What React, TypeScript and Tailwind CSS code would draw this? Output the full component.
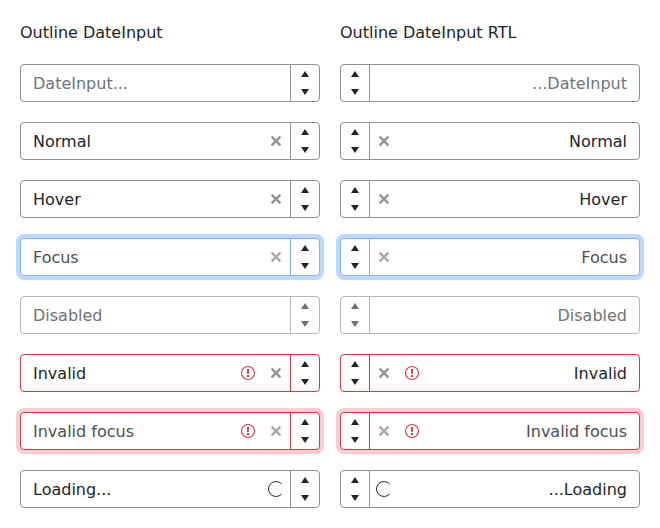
import React from "react";

type State = { label: string; rtl: string; kind?: "placeholder" | "focus" | "disabled" | "invalid" | "invalidFocus" | "loading" };

const rows: State[] = [
  { label: "DateInput...", rtl: "...DateInput", kind: "placeholder" },
  { label: "Normal", rtl: "Normal" },
  { label: "Hover", rtl: "Hover" },
  { label: "Focus", rtl: "Focus", kind: "focus" },
  { label: "Disabled", rtl: "Disabled", kind: "disabled" },
  { label: "Invalid", rtl: "Invalid", kind: "invalid" },
  { label: "Invalid focus", rtl: "Invalid focus", kind: "invalidFocus" },
  { label: "Loading...", rtl: "...Loading", kind: "loading" },
];

function Clear() {
  return (
    <svg className="h-4 w-4 shrink-0" viewBox="0 0 16 16" fill="none" stroke="currentColor" strokeWidth="2.3">
      <path d="M3.6 3.6l8.8 8.8M12.4 3.6l-8.8 8.8" />
    </svg>
  );
}

function Warning() {
  return (
    <svg className="h-4 w-4 shrink-0 text-[#dc3545]" viewBox="0 0 16 16" fill="currentColor">
      <circle cx="8" cy="8" r="6.5" fill="none" stroke="currentColor" strokeWidth="1.1" />
      <path d="M7 4h2l-.2 5H7.2zM7 10h2v2H7z" />
    </svg>
  );
}

function Spinner() {
  return (
    <svg className="h-4 w-4 shrink-0" viewBox="0 0 16 16" fill="none" stroke="currentColor">
      <path d="M13.6 3A7.5 7.5 0 1 0 13.6 13" />
    </svg>
  );
}

function Field({ state, rtl }: { state: State; rtl: boolean }) {
  const k = state.kind;
  const red = k === "invalid" || k === "invalidFocus";
  const focus = k === "focus" || k === "invalidFocus";
  const border = red ? "border-[#dc3545]" : k === "focus" ? "border-[#80b3ff]" : "border-[#8f9193]";
  const ring = k === "focus" ? "ring-4 ring-[#c0d8ff]" : k === "invalidFocus" ? "ring-4 ring-[#f6cdd1]" : "";
  const color = k === "placeholder" ? "text-[#6c757d]" : focus ? "text-[#495057]" : "text-[#212529]";
  const clear = k !== "placeholder" && k !== "disabled" && k !== "loading";
  return (
    <div className={`flex h-[38px] w-[300px] rounded-[4px] border bg-white ${rtl ? "flex-row-reverse" : ""} ${border} ${ring} ${color} ${k === "disabled" ? "opacity-65" : ""}`}>
      <div className={`flex min-w-0 flex-1 items-center ${rtl ? "flex-row-reverse pr-3 pl-1.5" : "pr-1.5 pl-3"}`}>
        <span className={`flex-1 pt-0.5 ${rtl ? "text-right" : ""}`}>{rtl ? state.rtl : state.label}</span>
        <div className={`flex items-center gap-3 ${rtl ? "flex-row-reverse" : ""}`}>
          {red && <Warning />}
          {clear && <span className={focus ? "text-[#a7a7a7]" : "text-[#909294]"}><Clear /></span>}
          {k === "loading" && <Spinner />}
        </div>
      </div>
      <div className={`flex w-[29px] shrink-0 items-center justify-center ${rtl ? "border-r" : "border-l"} ${border}`}>
        <svg className="h-9 w-4 text-[#212529]" viewBox="0 0 16 36" fill="currentColor">
          <path d="M8 6l4 6H4zM8 30l4-6H4z" />
        </svg>
      </div>
    </div>
  );
}

export default function App() {
  return (
    <main className="flex h-[528px] w-[660px] gap-5 bg-white px-5 pt-5 font-['DejaVu_Sans',sans-serif] text-base leading-6 text-[#212529]">
      {[false, true].map((rtl) => (
        <section key={String(rtl)} className="w-[300px]">
          <h1 className="mb-[19px] pt-px">{rtl ? "Outline DateInput RTL" : "Outline DateInput"}</h1>
          <div className="flex flex-col gap-5">
            {rows.map((row) => <Field key={row.label} state={row} rtl={rtl} />)}
          </div>
        </section>
      ))}
    </main>
  );
}
